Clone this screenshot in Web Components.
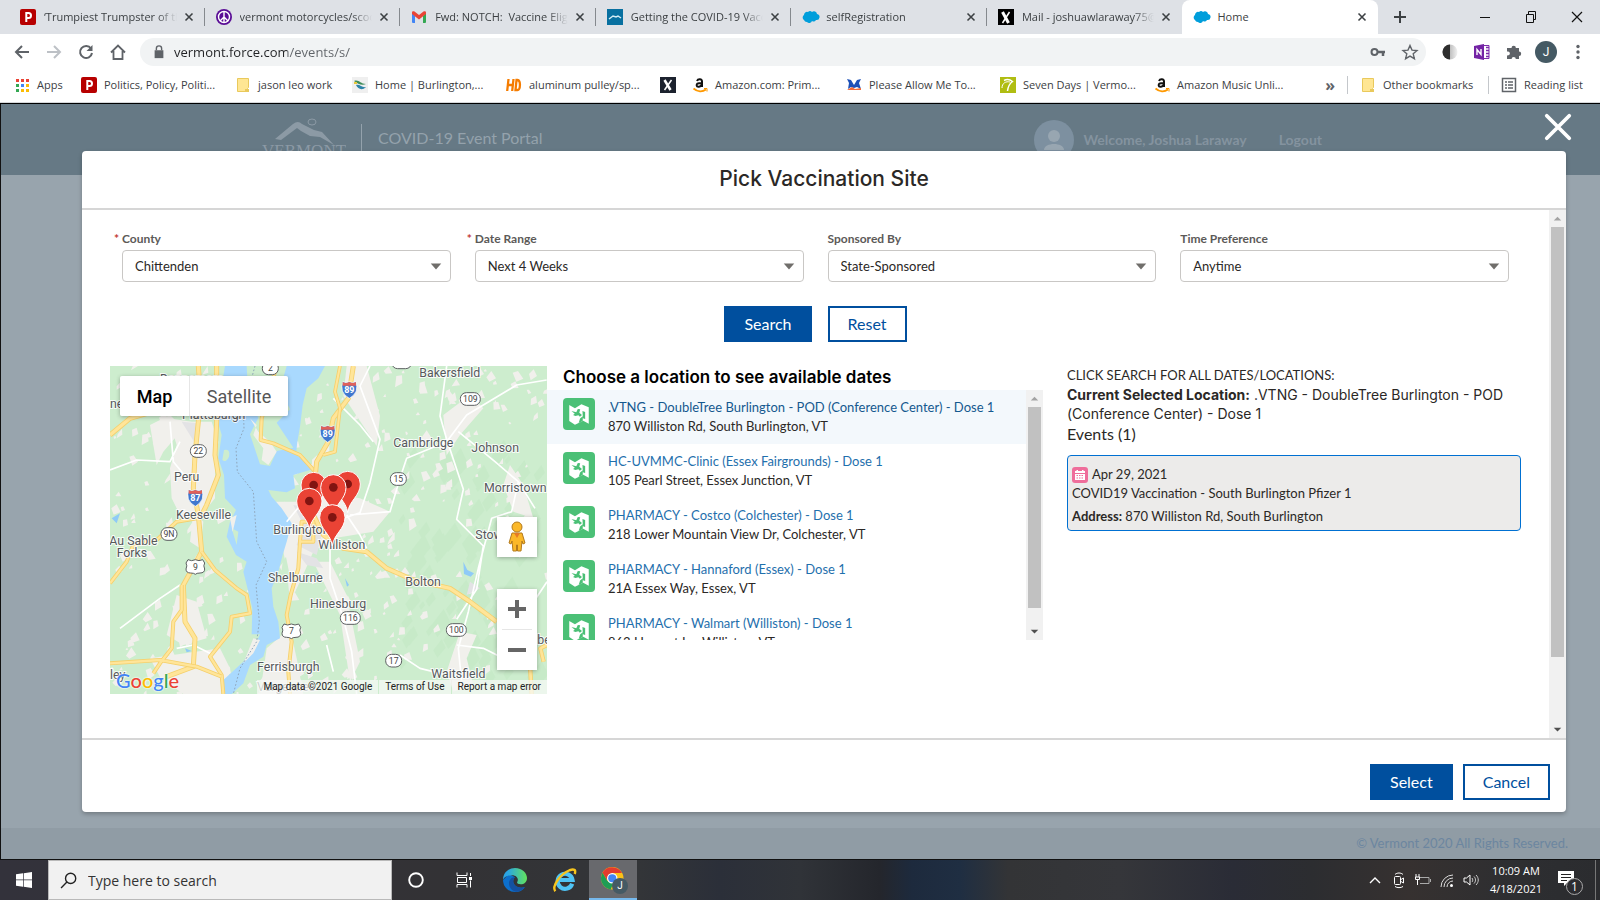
<!DOCTYPE html>
<html lang="en">
<head>
<meta charset="utf-8">
<title>Home</title>
<style>
html,body{margin:0;height:100%}
body{min-height:100vh;display:flex;flex-direction:column;font-family:"Open Sans","Noto Sans",sans-serif;font-size:11px;color:#3c4043;background:#000;overflow:hidden}
</style>
</head>
<body>
<browser-chrome></browser-chrome>
<portal-page></portal-page>
<task-bar></task-bar>
<script>
const define=(tag,render)=>customElements.define(tag,class extends HTMLElement{
  connectedCallback(){
    if(this.shadowRoot)return;
    this.attachShadow({mode:'open'}).innerHTML=render(n=>this.getAttribute(n)||'',this);
  }
});

/* ---------- icons ---------- */
const cloud='<path fill="#009edb" d="M2 6a3 3 0 0 1 4-3 3 3 0 0 1 4 0 3 3 0 0 1 5 2 3 3 0 0 1-1 6 3 3 0 0 1-4 1 3 3 0 0 1-5 1 3 3 0 0 1-3-2 3 3 0 0 1 0-5z"/>';
const icons={
  politico:'<rect width="16" height="16" rx="2" fill="#b70000"/><path d="M6.3 13V4h2.200a2.300 2.300 0 0 1 0 5H7" fill="none" stroke="#fff" stroke-width="2"/>',
  peace:'<circle cx="8" cy="8" r="8" fill="#5a0d96"/><circle cx="8" cy="8" r="5.500" fill="none" stroke="#fff" stroke-width="1.400"/><path d="M8 2.500v11M8 8l-4 4M8 8l4 4" stroke="#fff" stroke-width="1.400"/>',
  gmail:'<path fill="#4285f4" d="M1 4v9a1 1 0 0 0 1 1h2V7z"/><path fill="#34a853" d="M15 4v9a1 1 0 0 1-1 1h-2V7z"/><path fill="#ea4335" d="M1 5V3.500C1 2 2.500 2 3.500 2.500L8 6l4.500-3.500C13.500 2 15 2 15 3.500V5l-7 5.500z"/>',
  health:'<rect width="16" height="16" fill="#0870a0"/><path d="M2 10l4-3 3 1 2-1 3 2" fill="none" stroke="#d5edf5" stroke-width="1.500"/>',
  cloud,
  xmail:'<rect width="16" height="16" fill="#000"/><path d="M4.500 3l6 11" stroke="#fff" stroke-width="3"/><path d="M11.500 3l-7 11" stroke="#fff" stroke-width="1.500"/>',
  xdark:'<rect width="16" height="16" fill="#1c222e"/><path d="M4.500 3l6 10" stroke="#fff" stroke-width="2.500"/><path d="M11.500 3l-7 10" stroke="#fff" stroke-width="1.500"/>',
  apps:'<g><path fill="#ea4335" d="M2 2h3v3H2zM7 2h3v3H7zM12 2h3v3h-3z"/><path fill="#34a853" d="M2 7h3v3H2z"/><path fill="#4285f4" d="M7 7h3v3H7z"/><path fill="#fbbc04" d="M12 7h3v3h-3zM7 12h3v3H7zM12 12h3v3h-3z"/><path fill="#34a853" d="M2 12h3v3H2z"/></g>',
  folder:'<path fill="#ffe693" stroke="#e9c95c" d="M2.500 1.500h11v9l-1 1v3h-10z"/><path fill="#e9c95c" d="M10 12h4v3h-4z"/>',
  burl:'<rect width="16" height="16" fill="#efefef"/><path fill="#3f8c5a" d="M2 4c5-2 6 3 12 3-4 2-8 0-12-3z"/><path fill="#2d83a8" d="M4 8c4-1 6 3 10 2-4 4-8 2-10-2z"/><path fill="#e8c83c" d="M2 5h3v2H2z"/>',
  hd:'<g fill="none" stroke="#f57c00" stroke-width="2.300"><path d="M2.500 2L1.200 14M7.500 2L6.200 14M2 8h5M10.500 3L9.500 13h2c3 0 3.500-10 0-10z"/></g>',
  amazon:'<path d="M5 4c1-2.500 5-2.200 5 .5V10M10 6C5 6 4.500 7 4.700 8.600c.3 1.900 4 1.700 5-1" fill="none" stroke="#111" stroke-width="2"/><path d="M1.500 11.500c4 3.500 9 3.500 12.500 1" fill="none" stroke="#f90" stroke-width="1.800"/><path d="M12 11.500h3v3" fill="none" stroke="#f90"/>',
  dance:'<path fill="#1c50b8" d="M1 2l4 1 3 5 3-5 4-1-2 4 2 6-4-2-3 1-3-1-3 2 1-6z"/><path fill="#f26b3a" d="M1 13l5-3 3 2 6-1v2z"/>',
  seven:'<rect width="16" height="16" fill="#b0bd12"/><path d="M4 3.500c3-1.500 6-1 8.500 1C9 7 8 10 7.500 14" fill="none" stroke="#fff" stroke-width="1.500"/><path d="M2 11c0-5 4-7 8-6" fill="none" stroke="#fff"/>',
  list:'<rect x="1.500" y="1.500" width="13" height="13" fill="none" stroke="#5f6368" stroke-width="1.500"/><path d="M4 5h2M7 5h5M4 8h2M7 8h5M4 11h2M7 11h5" stroke="#5f6368" stroke-width="1.500"/>',
  back:'<path d="M15 8H2M8 2L2 8l6 6" fill="none" stroke="#5f6368" stroke-width="2"/>',
  fwd:'<path d="M1 8h13M8 2l6 6-6 6" fill="none" stroke="#bdc1c6" stroke-width="2"/>',
  reload:'<path d="M13 4.500A6 6 0 1 0 14 9" fill="none" stroke="#5f6368" stroke-width="2"/><path d="M14.500 1v6h-6z" fill="#5f6368"/>',
  home:'<path d="M1 8.500L8 1.500l7 7M3.500 7v8h9V7" fill="none" stroke="#5f6368" stroke-width="1.800"/>',
  lock:'<path fill="#5f6368" d="M3 6h10v9H3z"/><path d="M5 6V4a3 3 0 0 1 6 0v2" fill="none" stroke="#5f6368" stroke-width="1.600"/>',
  key:'<circle cx="4.500" cy="8" r="3" fill="none" stroke="#5f6368" stroke-width="2"/><path d="M7 8h8M13 8v4" stroke="#5f6368" stroke-width="2.500"/>',
  star:'<path d="M8 1.500l2 4.600 5 .4-3.800 3.300 1.200 4.900L8 12.100l-4.400 2.600 1.200-4.900L1 6.500l5-.4z" fill="none" stroke="#5f6368" stroke-width="1.400"/>',
  moon:'<defs><linearGradient id="m"><stop offset=".4" stop-color="#b5b5b5"/><stop offset="1" stop-color="#f2f2f2"/></linearGradient></defs><circle cx="8" cy="8" r="7.500" fill="url(#m)"/><path d="M8 .5a7.500 7.500 0 0 0 0 15z" fill="#2e2e2e"/>',
  onenote:'<path fill="#fff" stroke="#7b2bab" d="M8 1.500h7v13H8z"/><path d="M12 3.500h3M12 6.500h3M12 9.500h3M12 12.500h3" stroke="#7b2bab" stroke-width="1.500"/><path fill="#7424a5" d="M0 2l10-2v16L0 14z"/><path d="M3 11V5.500l4 5V5" fill="none" stroke="#fff" stroke-width="1.400"/>',
  puzzle:'<path fill="#5f6368" d="M1 4h4.500a2.200 2.200 0 1 1 4.400 0H13v3.600a2.200 2.200 0 1 1 0 4.400V15H9.800a2.100 2.100 0 1 0-4.200 0H1v-3.800a2 2 0 1 0 0-3.600z"/>',
  dots:'<g fill="#5f6368"><circle cx="8" cy="2.500" r="1.700"/><circle cx="8" cy="8" r="1.700"/><circle cx="8" cy="13.500" r="1.700"/></g>',
  plus:'<path d="M8 2v12M2 8h12" stroke="#3c4043" stroke-width="2"/>',
  min:'<path d="M3 8.500h10" stroke="#111"/>',
  restore:'<path d="M3.500 5.500h7v8h-7zM5.500 5V2.500h7v8H11" fill="none" stroke="#111"/>',
  close:'<path d="M3 3l10 10M13 3L3 13" stroke="#111" stroke-width="1.200"/>',
  tabx:'<path d="M4 4l8 8M12 4l-8 8" stroke="#3c4043" stroke-width="1.800"/>',
  bigx:'<path d="M2 2l12 12M14 2L2 14" stroke="#fff" stroke-width="2" stroke-linecap="round"/>',
  up:'<path d="M4 10l4-4 4 4z" fill="#a3a3a3"/>',
  down:'<path d="M4 6l4 4 4-4z" fill="#505050"/>',
  map:'<path fill="#fff" d="M1.500 2L5.300 4.200 9.600 1.500l4.900 2V14.500l-3.700-2-5.500 2.700-3.800-2.500z"/><path fill="#4bc076" d="M3 6l3.200.8 1-2.200 1.600.2-.6 2.400L10 8.600 8.600 9.800l-1-1-2 .6L4 8.600 5.200 7.800zM10.300 6l1.800.6v4.800l-1.500-.6zM7.800 14l2.700-1.300V9.500L8.700 11z"/>',
  cal:'<path fill="#fff" d="M3 4h1.500V3H6v1h4V3h1.500v1H13v2H3zM3 7h10v6H3z"/><path d="M4.500 8.500h7M4.500 11h7" stroke="#ef6e9b" stroke-dasharray="1.500 1"/>',
  win:'<path fill="#fff" d="M0 2.300L7 1.300V7.600H0zM7.700 1.200L16 0v7.600H7.700zM0 8.300h7v6.400l-7-1zM7.700 8.300H16V16l-8.300-1.200z"/>',
  search:'<circle cx="10" cy="6" r="4.800" fill="none" stroke="#222" stroke-width="1.300"/><path d="M6.500 9.500L1 15" stroke="#222" stroke-width="1.300"/>',
  cortana:'<circle cx="8" cy="8" r="6.800" fill="none" stroke="#fff" stroke-width="1.900"/>',
  taskview:'<path d="M1 .500v3h10v-3M1 15.500v-3h10v3M1.500 5.500h9v5h-9zM14.500 1v3M14.500 8.500v7" fill="none" stroke="#fff"/><path d="M13 5h3v3h-3z" fill="#fff"/>',
  edge:'<defs><linearGradient id="e"><stop offset=".2" stop-color="#2aa5e4"/><stop offset="1" stop-color="#62e35c"/></linearGradient></defs><path fill="#0c6fcc" d="M0 8a8 8 0 0 0 8 8c3 0 5-1 6.600-3.400-3 1.200-6.600.2-7.600-2.600-.6-2 .6-3.500 1-3.800L4 4z"/><path fill="#1450a0" d="M4 10c0 3 2 5.500 5 5.900 2.500-.3 4.500-1.500 5.600-3.300-3 1.200-6.600.2-7.600-2.600-.6-2 .6-3.500 1-3.800C6 5.700 4 8 4 10z"/><path fill="url(#e)" d="M0 8C0 3 4 0 8 0c5 0 8 3.500 8 6.600 0 2.700-2 4.200-4.200 4.200-2 0-2.800-.8-2.300-1.500C10.600 7.600 9.500 4.800 6 4.800 3 4.800.3 6.500 0 8z"/>',
  ie:'<path d="M12.800 10.500A5 5 0 1 1 13 8H4" fill="none" stroke="#4fc4f5" stroke-width="2.800"/><path d="M1.500 15.500C-1 12 5 4 11 1.500c3-1 4.500-.500 3.500 2.500" fill="none" stroke="#f7c51e" stroke-width="1.600"/>',
  chrome:'<circle cx="7.500" cy="7.500" r="7.500" fill="#fbc116"/><path fill="#e33b2e" d="M1 3.800A7.500 7.500 0 0 1 14 4H7.500L4.200 9z"/><path fill="#1f9d55" d="M1 3.800l3.300 5.600L8 11l-1.500 4A7.500 7.500 0 0 1 1 3.800z"/><circle cx="7.500" cy="7.500" r="3.500" fill="#fff"/><circle cx="7.500" cy="7.500" r="2.700" fill="#4285f4"/>',
  caret:'<path d="M3 11l5-5 5 5" fill="none" stroke="#fff" stroke-width="1.400"/>',
  meet:'<rect x="3.500" y="4.500" width="6" height="8" rx="1" fill="none" stroke="#fff"/><path d="M10 7.500l2.500-1.500v5L10 9.500M4 2.500c2-2 6-2 8 0M4 14.500c2 1.500 6 1.500 8 0" fill="none" stroke="#fff"/>',
  battery:'<path d="M5 5.500h9v6H5M15.500 7v3" fill="none" stroke="#aaa"/><path d="M1 2v3M4 2v3M.500 5h4v2.500h-4zM2.500 7.500V13" fill="none" stroke="#fff"/>',
  wifi:'<g fill="none" stroke="#ddd"><path d="M2 15A12 12 0 0 1 14 3M5 15a9 9 0 0 1 9-9M8 15a6 6 0 0 1 6-6"/></g><circle cx="12.500" cy="13.500" r="1.500" fill="#fff"/>',
  volume:'<path d="M1 6h2.500L7 3v10l-3.500-3H1z" fill="none" stroke="#fff"/><path d="M9 6c1 1.500 1 3 0 4M11 4.500c2 2 2 5 0 7M13 3c3 3 3 7 0 10" fill="none" stroke="#ccc"/>',
  note:'<path fill="#fff" d="M0 0h16v12H9l-3 3v-3H0z"/><path d="M3 3.500h10M3 6.500h10M3 9.500h6" stroke="#222"/>',
  caretdown:'<path d="M2 5h12l-6 7z" fill="#706e6b"/>'
};
define('ui-icon',a=>`<style>:host{display:inline-block;flex:none;width:${a('size')||16}px;height:${a('size')||16}px}svg{display:block;width:100%;height:100%;overflow:visible}</style><svg viewBox="0 0 16 16" aria-hidden="true">${icons[a('name')]}</svg>`);

define('icon-button',a=>`<style>:host{display:block;flex:none}button{display:flex;align-items:center;justify-content:center;width:${a('width')||32}px;height:${a('height')||32}px;padding:0;border:0;background:none}</style><button aria-label="${a('label')}"><ui-icon name="${a('name')}" size="${a('size')||16}"></ui-icon></button>`);

/* ---------- browser ---------- */
define('browser-tab',a=>`<style>
:host{display:flex;flex:1 1 0;min-width:0;height:34px;align-items:center;position:relative;padding:0 4px 0 11px;box-sizing:border-box}
:host::after{content:"";position:absolute;right:0;top:8px;height:18px;width:1px;background:#85898e}
:host([last])::after,:host([active])::after{display:none}
:host([active]){background:#fff;border-radius:8px 8px 0 0}
span{flex:1;min-width:0;margin-left:8px;overflow:hidden;white-space:nowrap;line-height:18px;-webkit-mask-image:linear-gradient(90deg,#000 calc(100% - 20px),transparent);mask-image:linear-gradient(90deg,#000 calc(100% - 20px),transparent)}
:host([active]) span{-webkit-mask-image:none;mask-image:none}
</style><ui-icon name="${a('icon')}"></ui-icon><span><slot></slot></span><icon-button name="tabx" label="Close tab" size="14" width="24"></icon-button>`);

define('bookmark-item',a=>`<style>
:host{display:block;flex:none}
a{display:flex;align-items:center;gap:7px;color:#3c4043;text-decoration:none;line-height:18px;white-space:nowrap}
span{width:${a('width')?a('width')+'px':'auto'}}
:host([bare]) span{display:none}
</style><a href="#" aria-label="${a('label')}"><ui-icon name="${a('icon')}"></ui-icon><span><slot></slot></span></a>`);

define('browser-chrome',()=>`<style>
:host{display:block;flex:none;background:#fff;border-bottom:1px solid #000}
.tabs{display:flex;height:34px;background:#dee1e6;padding-left:9px;align-items:center}
.list{display:flex;flex:1;min-width:0}
.win{display:flex;margin-left:40px;align-items:flex-start}
.bar{display:flex;height:36px;align-items:center;padding:0 6px}
.url{flex:1;display:flex;align-items:center;height:28px;border-radius:14px;background:#f1f3f4;margin:0 8px 0 6px;padding-left:12px;box-sizing:border-box}
input{flex:1;min-width:0;border:0;outline:0;font:13px "Open Sans","Noto Sans",sans-serif;color:transparent;caret-color:#202124;background:linear-gradient(90deg,#202124 121px,#5f6368 121px);-webkit-background-clip:text;background-clip:text;padding:0 0 0 8px;height:24px}
.me{width:22px;height:22px;border-radius:50%;border:0;padding:0;background:#455a64;color:#fff;font:12px Roboto,sans-serif;margin:0 5px}
.marks{display:flex;height:32px;box-sizing:content-box;align-items:center;gap:16px;padding:0 14px;border-bottom:1px solid #d5d7da}
.marks>*{padding-bottom:3px}
i{width:1px;height:18px;background:#c4c7cb}
.end{display:flex;gap:12px;align-items:center;margin-left:auto}
.more{border:0;background:none;padding:0;font:bold 16px "Open Sans",sans-serif;color:#5f6368;line-height:16px}
</style>
<div class="tabs"><div class="list">
<browser-tab icon="politico">‘Trumpiest Trumpster of them</browser-tab>
<browser-tab icon="peace">vermont motorcycles/scooters</browser-tab>
<browser-tab icon="gmail">Fwd: NOTCH:&nbsp; Vaccine Eligible</browser-tab>
<browser-tab icon="health">Getting the COVID-19 Vaccine</browser-tab>
<browser-tab icon="cloud">selfRegistration</browser-tab>
<browser-tab icon="xmail" last>Mail - joshuawlaraway75@</browser-tab>
<browser-tab icon="cloud" active>Home</browser-tab></div>
<icon-button name="plus" label="New tab" width="44"></icon-button>
<div class="win"><icon-button name="min" label="Minimize" width="46"></icon-button><icon-button name="restore" label="Restore" width="46"></icon-button><icon-button name="close" label="Close" width="46"></icon-button></div></div>
<div class="bar"><icon-button name="back" label="Back"></icon-button><icon-button name="fwd" label="Forward"></icon-button><icon-button name="reload" label="Reload"></icon-button><icon-button name="home" label="Home"></icon-button>
<div class="url"><ui-icon name="lock" size="14"></ui-icon><input aria-label="Address" value="vermont.force.com/events/s/"><icon-button name="key" label="Passwords"></icon-button><icon-button name="star" label="Bookmark"></icon-button></div>
<icon-button name="moon" label="Dark mode"></icon-button><icon-button name="onenote" label="OneNote"></icon-button><icon-button name="puzzle" label="Extensions"></icon-button><button class="me">J</button><icon-button name="dots" label="Menu"></icon-button></div>
<div class="marks">
<bookmark-item icon="apps" width="28">Apps</bookmark-item>
<bookmark-item icon="politico" width="115">Politics, Policy, Politi...</bookmark-item>
<bookmark-item icon="folder" width="78">jason leo work</bookmark-item>
<bookmark-item icon="burl" width="115">Home | Burlington,...</bookmark-item>
<bookmark-item icon="hd" width="115">aluminum pulley/sp...</bookmark-item>
<bookmark-item icon="xdark" bare label="Xfinity"></bookmark-item>
<bookmark-item icon="amazon" width="115">Amazon.com: Prim...</bookmark-item>
<bookmark-item icon="dance" width="115">Please Allow Me To...</bookmark-item>
<bookmark-item icon="seven" width="115">Seven Days | Vermo...</bookmark-item>
<bookmark-item icon="amazon" width="115">Amazon Music Unli...</bookmark-item>
<div class="end"><button class="more" aria-label="More bookmarks">»</button><i></i><bookmark-item icon="folder" width="93">Other bookmarks</bookmark-item><i></i><bookmark-item icon="list" width="62">Reading list</bookmark-item></div>
</div>`);

/* ---------- shared controls ---------- */
define('action-button',a=>`<style>
:host{display:block}
button{height:36px;box-sizing:border-box;border:2px solid #004f9e;background:#fff;color:#004f9e;font:16px Lato,sans-serif;padding:0 18px 2px;display:block}
:host([primary]) button{background:#004f9e;color:#fff}
</style><button type="button"><slot></slot></button>`);

define('select-field',a=>`<style>
:host{display:block;padding:0 12px;position:relative}
label{display:block;font:bold 12px/18px Lato,sans-serif;color:#5c5a58;margin-bottom:2px}
abbr{position:absolute;left:4px;color:#c23934;text-decoration:none}
.box{display:grid;align-items:center}
select,ui-icon{grid-area:1/1}
ui-icon{justify-self:end;margin-right:8px;pointer-events:none}
select{appearance:none;-webkit-appearance:none;width:100%;height:32px;border:1px solid #c9c7c5;border-radius:4px;background:#fff;color:#2b2826;font:13px Lato,sans-serif;padding:0 30px 0 12px}
</style><label for="s">${a('required')?'<abbr title="required">*</abbr>':''}${a('label')}</label><div class="box"><select id="s"><option>${a('value')}</option></select><ui-icon name="caretdown" size="14"></ui-icon></div>`);

define('scroll-rail',a=>`<style>
:host{display:flex;flex-direction:column;flex:none;width:17px;background:#f1f1f1}
.t{flex:1;min-height:0;padding:0 2px}
.t div{height:${a('size')}%;background:#c1c1c1}
</style><icon-button name="up" label="Scroll up" width="17" height="17" size="15"></icon-button><div class="t"><div></div></div><icon-button name="down" label="Scroll down" width="17" height="17" size="15"></icon-button>`);

define('location-item',a=>`<style>
:host{display:flex;gap:13px;height:54px;box-sizing:border-box;padding:8px 12px 0 16px}
:host([selected]){background:#f3f8fc}
.pic{width:32px;height:32px;border-radius:4px;background:#4bc076;display:grid;place-items:center;flex:none}
.txt{font:13px/19px Lato,sans-serif;color:#2b2826;white-space:nowrap}
a{color:#1f70ad;text-decoration:none;display:block}
:host([selected]) a{color:#15598f}
</style><div class="pic"><ui-icon name="map" size="24"></ui-icon></div><div class="txt"><a href="#">${a('name')}</a>${a('address')}</div>`);

/* ---------- map ---------- */
const scatter=()=>{
  let s=7,out='',dark='';const r=()=>(s=(s*16807)%2147483647)/2147483647;
  for(let i=0;i<420;i++){
    const x=30+r()*1311,y=33+r()*984,k=5+r()*13;
    if(x>900&&y>480&&r()<.75)continue;
    out+=`M${x|0} ${y|0}l${k|0} ${(-k*r()*1.6)|0}l${(k*r())|0} ${(k*1.4)|0}l${(-k*1.3)|0} ${(k*r())|0}z`;
  }
  for(let i=0;i<90;i++){
    const x=880+r()*430,y=300+r()*700,k=12+r()*30;
    dark+=`M${x|0} ${y|0}l${k|0} ${(-k*1.3)|0}l${(k*.5)|0} ${k|0}l${-k|0} ${(k*1.2)|0}z`;
  }
  return `<path fill="#bfe5c1" opacity=".4" d="${dark}"/><path fill="#f1f0ec" d="${out}"/>`;
};
const lab=(x,y,t)=>`<text x="${x}" y="${y}">${t}</text>`;
const route=(x,y,t)=>`<rect x="${x-(t.length>2?30:24)}" y="${y-19}" width="${t.length>2?60:48}" height="38" rx="18" fill="#fff" stroke="#5d6062" stroke-width="3"/><text class="n" x="${x}" y="${y+9}">${t}</text>`;
const us=(x,y,t)=>`<path d="M${x-22} ${y-21}q11 6 22 0q11 6 22 0l6 10q-5 8 0 18q0 12-14 12q-10 0-14 4q-4-4-14-4q-14 0-14-12q5-10 0-18z" fill="#fff" stroke="#5d6062" stroke-width="3"/><text class="n" x="${x}" y="${y+9}">${t}</text>`;
const inter=(x,y,t)=>`<path d="M${x-19} ${y-23}q9 6 19 0q10 6 19 0q6 14 2 28q-6 14-21 22q-15-8-21-22q-4-14 2-28z" fill="#3f77cf" stroke="#fff" stroke-width="2"/><path d="M${x-20} ${y-22}q9 6 20 0q11 6 20 0v11h-40z" fill="#e0605a"/><text class="i" x="${x}" y="${y+12}">${t}</text>`;
const pin=(x,y)=>`<path d="M${x} ${y+86}C${x-4} ${y+50} ${x-38} ${y+36} ${x-38} ${y}a38 38 0 0 1 76 0C${x+38} ${y+36} ${x+4} ${y+50} ${x} ${y+86}z" fill="#ea4335" stroke="#fff" stroke-width="3"/><circle cx="${x}" cy="${y}" r="13" fill="#811411"/>`;
const road=(d,w=10)=>`<path d="${d}" class="o" stroke-width="${w+5}"/><path d="${d}" class="y" stroke-width="${w}"/>`;
define('location-map',()=>`<style>
:host{display:block;position:relative;height:328px;overflow:hidden;background:#cdedce;font-family:Roboto,sans-serif}
svg.m{display:block;width:100%;height:100%}
svg path{stroke-linejoin:round}
text{font:37px Roboto,sans-serif;fill:#56595c;stroke:#fff;stroke-width:6px;paint-order:stroke;stroke-opacity:.85}
text.n{font-size:26px;fill:#444;stroke:none;text-anchor:middle}
text.i{font:bold 27px Roboto,sans-serif;fill:#fff;stroke:none;text-anchor:middle}
.o{stroke:#f5d06c;fill:none}.y{stroke:#ffe599;fill:none}.w{stroke:#fff;fill:none;stroke-width:5}
button{border:0;background:#fff;padding:0;display:flex;align-items:center;justify-content:center}
.type{position:absolute;left:10px;top:10px;display:flex;box-shadow:0 1px 4px rgba(0,0,0,.3);border-radius:2px;overflow:hidden}
.type button{height:40px;font:18px Roboto,sans-serif;color:#565656;width:98px}
.type button:first-child{width:70px;font-weight:500;color:#000;border-right:1px solid #e6e6e6}
.side{position:absolute;right:10px;bottom:24px;display:flex;flex-direction:column;gap:32px}
.side div{box-shadow:0 1px 4px rgba(0,0,0,.3);border-radius:2px;background:#fff}
.side button{width:40px;height:40px}
hr{margin:0 5px;border:0;height:1px;background:#e6e6e6}
.g{position:absolute;left:6px;bottom:1px;font:500 20px/26px Lato,sans-serif;text-shadow:0 0 2px #fff,0 0 2px #fff}
.legal{position:absolute;right:0;bottom:0;height:14px;font-size:10px;line-height:14px;display:flex;gap:1px;white-space:nowrap}
.legal>*{background:rgba(245,248,245,.75);padding:0 6px;color:#222;text-decoration:none}
</style>
<svg class="m" viewBox="30 33 1311 984" preserveAspectRatio="xMidYMid slice" role="img" aria-label="Map of locations">
${scatter()}
<g fill="#f1f0ec"><path d="M205 190l70 10 60 0 20 60-10 90 0 80-40 50-60 10-30-60-5-90 20-70z"/><path d="M150 210l60-30 40 40-60 70-20 40z"/><path d="M520 440l70 0 60-30 130 20 90 40-50 60-120 20-60 40-40 90-30 60-10-100z"/><path d="M640 620l50 0 50 100 40 200-30 60-30-200z"/><path d="M280 470l30 30-10 80-30-20zM230 720l60 20 30 110-70 20-50-30z"/><path d="M150 910l210-30 30 60-10 77H250l-70-50z"/><path d="M740 33h60l40 150-10 90-40-60-60-90z"/><path d="M1030 180l80-60 40 40-70 80-40 60z"/><path d="M1230 330l40 60 30 100-60-20-30-80zM1080 830l50 10-30 70 20 80-60 20-20-60z"/><path d="M500 880l70-60 20 90 20 107H480z"/></g>
<path fill="#e3e3e5" d="M580 450l60 10 30 60-20 80-60-30 20-60zM590 590l60 20 20 30-50-10zM245 200l50 5-10 60zM1110 680l30 20-40 20z"/>
<path fill="#a9d9fe" d="M375 33H675L655 70 620 100 608 150 600 215 592 260 588 298 640 342 580 360 585 400 560 412 505 405 515 425 545 460 575 505 560 560 548 600 535 650 515 700 520 755 535 800 540 850 500 870 490 905 450 930 430 985 395 1017H365L370 975 430 920 470 860 480 838 455 838 457 760 440 690 430 650 440 620 408 600 380 545 390 500 408 465 375 430 372 360 355 310 365 240 350 185Z"/>
<path fill="#cdedce" d="M440 33h120l-20 70 30 60-40 40 50 75-50 10-20 45-30-5-30-90 25-50-30-60zM372 285q20-5 15 20-10 20-20 10zM548 620l10-15 12 60-30 20zM395 520l20 10-5 40z"/>
<path fill="#f1f0ec" d="M450 190l20 20-10 30 30 40-5 35 20 15 25-40-20-30-35-30zM520 100l20 60 20-40zM390 490l20-10-12 50zM460 850l20 5-20 40-30 30z"/>
<path d="M465 33L430 160 432 220 408 280 412 350 460 410 470 560 500 620 468 690 478 800 470 860 420 940 400 1017" fill="none" stroke="#8fa6bc" stroke-width="3" stroke-dasharray="5 6"/>
<g fill="#8fcaf7"><path d="M1090 620l12 25 20 10-10 10-20-8zM735 670l12 20-6 5zM650 650l8 20-8 8zM255 880l20 8-15 4zM35 490l25-15-10 30z"/></g>
<path class="w" d="M30 345l80-30 100 5 30-60M210 200l10 120 50 60M340 180l5-60M810 33l-30 60 60 160-30 130-30 90-90 30M700 130l80 80 40 50M1040 33l-20 150 20 70 50 150-20 90 80 80-20 130-60 90M1040 260l60-80 150-90 90-15M1040 260l-120 50-20 60-30 100-120 10M1075 230l110 90 70 60 50 80M1255 380l-20 90-60 20-40 150-30 130-30 110 10 100M1070 870l80 10 60 30M690 560l0 110 40 120 25 100 15 127M560 500l50-60M740 480l40 60 20 40M900 900l60 40 80 20M340 120l-80 60M60 820l120-90 60-40M680 870l20 80M1341 680l-60 90-20 110M230 880l50-10 60 30"/>
${road('M30 240L90 190 160 170')}${road('M295 33L300 100 295 200 285 300 280 400 295 480 305 590 250 690 255 800 285 850 280 935 200 965')}${road('M350 33L350 200 345 300 355 360 320 450 300 490')}${road('M30 685L80 620 100 570 170 555 230 500 290 490',7)}${road('M305 590L345 645 410 700 440 720 450 775 395 785 390 830 330 905 365 960 370 1017',7)}${road('M245 690L245 765 220 800 215 880 180 925 160 955M30 925L180 915 290 935 365 965',7)}
${road('M530 33L485 190 482 255 520 265 600 300 645 350',7)}${road('M760 33L745 130 700 190 685 260 650 320 645 370 640 480 670 540 730 580 800 590 860 640 940 675 1050 700 1110 740 1150 770 1190 800')}${road('M720 33L705 110 720 160 705 290 670 300',6)}${road('M605 500h35v60h-40zM600 560L595 640 572 720 560 780 575 860 565 950 570 1017',7)}${road('M1341 870l-20 10 10 40M1290 930l5 87',8)}
${lab(180,85,'Dannemora')}${lab(30,160,'ner')}${lab(246,193,'Plattsburgh')}${lab(958,67,'Bakersfield')}${lab(880,277,'Cambridge')}${lab(1114,292,'Johnson')}${lab(222,379,'Peru')}${lab(1152,411,'Morristown')}${lab(228,492,'Keeseville')}${lab(520,538,'Burlington')}${lab(1126,552,'Stowe')}${lab(28,570,'Au Sable')}${lab(50,606,'Forks')}${lab(655,582,'Williston')}${lab(504,682,'Shelburne')}${lab(916,693,'Bolton')}${lab(630,760,'Hinesburg')}${lab(1312,866,'bel')}${lab(471,949,'Ferrisburgh')}${lab(994,970,'Waitsfield')}${lab(30,972,'ley')}${lab(471,1007,'Vergennes')}
${route(511,40,'2')}${route(905,22,'108')}${route(1111,132,'109')}${route(295,288,'22')}${route(895,372,'15')}${route(207,537,'9N')}${route(751,789,'116')}${route(1069,825,'100')}${route(881,917,'17')}${us(286,635,'9')}${us(574,828,'7')}${inter(748,103,'89')}${inter(683,235,'89')}${inter(286,427,'87')}
${pin(641,390)}${pin(743,387)}${pin(700,397)}${pin(628,438)}${pin(697,487)}
</svg>
<div class="type"><button>Map</button><button>Satellite</button></div>
<div class="side"><div><button aria-label="Street view"><svg width="18" height="32" viewBox="0 0 18 32"><path d="M4 12h10l3 10-2 1-1-3-1 10H9.500V24h-1v6H5L4 20l-1 3-2-1z" fill="#fbb829" stroke="#b37a1c"/><circle cx="9" cy="6" r="5" fill="#fbb829" stroke="#b37a1c"/><path d="M6 12h6l-3 5z" fill="#e57b26"/></svg></button></div>
<div><button aria-label="Zoom in"><svg width="18" height="18"><path d="M9 0v18M0 9h18" stroke="#666" stroke-width="4"/></svg></button><hr><button aria-label="Zoom out"><svg width="18" height="18"><path d="M0 9h18" stroke="#666" stroke-width="4"/></svg></button></div></div>
<div class="g"><span style="color:#4285f4">G</span><span style="color:#ea4335">o</span><span style="color:#fbbc04">o</span><span style="color:#4285f4">g</span><span style="color:#34a853">l</span><span style="color:#ea4335">e</span></div>
<div class="legal"><span>Map data ©2021 Google</span><a href="#">Terms of Use</a><a href="#">Report a map error</a></div>`);

/* ---------- events ---------- */
define('event-card',a=>`<style>
:host{display:block;box-sizing:border-box;border:1px solid #0070d2;border-radius:4px;background:#ecebea;font:13px/19px Lato,sans-serif;color:#2b2826;padding:9px 4px 4px;height:76px}
.d{display:flex;gap:4px;align-items:center}
.c{width:16px;height:16px;border-radius:3px;background:#ef6e9b;flex:none}
.a{margin-top:4px}
</style><div class="d"><div class="c"><ui-icon name="cal"></ui-icon></div>${a('date')}</div><div>${a('name')}</div><div class="a"><b>Address:</b> ${a('address')}</div>`);

/* ---------- dialog ---------- */
define('site-dialog',()=>`<style>
:host{display:flex;flex-direction:column;background:#fff;border-radius:4px;box-shadow:0 2px 4px rgba(0,0,0,.25);color:#2b2826;font-family:Lato,sans-serif}
h2{margin:0;height:59px;box-sizing:border-box;padding-bottom:2px;display:grid;place-items:center;font:500 21px Inter,sans-serif;border-bottom:2px solid #d6d6d6}
.body{flex:1;min-height:0;display:flex}
.in{flex:1;min-width:0;padding:20px 28px 0;overflow:hidden}
.f{display:grid;grid-template-columns:repeat(4,1fr)}
.b{display:flex;justify-content:center;gap:16px;margin:24px 0}
.g{display:grid;grid-template-columns:minmax(0,437fr) minmax(0,496fr) minmax(0,478fr)}
h3{margin:0;height:24px;padding-left:16px;font:600 17px/22px Inter,sans-serif;color:#000}
.l{display:flex;height:250px}
.items{flex:1;min-width:0;overflow:hidden}
.r{padding-left:24px;font:13px/19px Lato,sans-serif}
.r p{margin:0}
.r .sel{font:14px/19px Inter,sans-serif}
.r .ev{font-size:16px;line-height:21px;margin-bottom:11px}
footer{flex:none;height:72px;box-sizing:content-box;border-top:2px solid #d6d6d6;display:flex;gap:10px;justify-content:flex-end;align-items:center;padding-right:16px;padding-top:0;box-sizing:border-box;height:74px}
footer action-button{margin-top:12px}
</style>
<h2>Pick Vaccination Site</h2>
<div class="body"><div class="in">
<div class="f"><select-field label="County" value="Chittenden" required="1"></select-field><select-field label="Date Range" value="Next 4 Weeks" required="1"></select-field><select-field label="Sponsored By" value="State-Sponsored"></select-field><select-field label="Time Preference" value="Anytime"></select-field></div>
<div class="b"><action-button primary>Search</action-button><action-button>Reset</action-button></div>
<div class="g"><location-map></location-map>
<div><h3>Choose a location to see available dates</h3><div class="l"><div class="items">
<location-item selected name=".VTNG - DoubleTree Burlington - POD (Conference Center) - Dose 1" address="870 Williston Rd, South Burlington, VT"></location-item>
<location-item name="HC-UVMMC-Clinic (Essex Fairgrounds) - Dose 1" address="105 Pearl Street, Essex Junction, VT"></location-item>
<location-item name="PHARMACY - Costco (Colchester) - Dose 1" address="218 Lower Mountain View Dr, Colchester, VT"></location-item>
<location-item name="PHARMACY - Hannaford (Essex) - Dose 1" address="21A Essex Way, Essex, VT"></location-item>
<location-item name="PHARMACY - Walmart (Williston) - Dose 1" address="863 Harvest Ln, Williston, VT"></location-item>
</div><scroll-rail size="93"></scroll-rail></div></div>
<div class="r"><p>CLICK SEARCH FOR ALL DATES/LOCATIONS:</p><p class="sel"><b>Current Selected Location:</b> .VTNG - DoubleTree Burlington - POD (Conference Center) - Dose 1</p><p class="ev">Events (1)</p>
<event-card date="Apr 29, 2021" name="COVID19 Vaccination - South Burlington Pfizer 1" address="870 Williston Rd, South Burlington"></event-card></div></div>
</div><scroll-rail size="87"></scroll-rail></div>
<footer><action-button primary>Select</action-button><action-button>Cancel</action-button></footer>`);

define('portal-page',()=>`<style>
:host{display:flex;flex:1;min-height:0;flex-direction:column;position:relative;background:#98a4ad;font-family:Lato,sans-serif;border-left:1px solid #111;border-bottom:1px solid #111;overflow:hidden}
header{height:71px;background:#667985;display:flex;align-items:center;padding:0 278px 0 261px;color:#94a2ac}
.name{border-left:1px solid #94a2ac;margin-left:15px;padding:0 0 4px 16px;font-size:16px;line-height:28px}
.user{margin-left:auto;display:flex;align-items:center;gap:9px;font:bold 14px Lato,sans-serif;color:#84939f}
.user a{color:inherit;text-decoration:none;margin-left:23px}
.logo text{font:17px "Liberation Serif",serif;fill:#8c9aa5}
main{flex:1}
.foot{height:31px;background:#909ca5;color:#6c86a0;font-size:13px;line-height:31px;text-align:right;padding-right:32px}
site-dialog{position:absolute;inset:47px 34px 47px 81px}
.x{position:absolute;right:26px;top:7px}
</style>
<header><svg class="logo" width="84" height="50" viewBox="0 0 84 50" role="img" aria-label="Vermont"><path d="M13 24L31 9q5-4 9 0l12 6 8 2 12 13-14-8-10-1-9-5-4-3-16 12z" fill="#8c9aa5"/><ellipse cx="50" cy="7" rx="4" ry="3" fill="none" stroke="#8c9aa5"/><text x="0" y="41">VERMONT</text></svg>
<div class="name">COVID-19 Event Portal</div>
<div class="user"><svg width="40" height="40" viewBox="0 0 40 40"><circle cx="20" cy="20" r="20" fill="#7d90a0"/><circle cx="20" cy="16" r="6" fill="#98a6b1"/><path d="M10 30c0-8 20-8 20 0z" fill="#98a6b1"/></svg><span>Welcome, Joshua Laraway</span><a href="#">Logout</a></div></header>
<main></main><div class="foot">© Vermont 2020 All Rights Reserved.</div>
<icon-button class="x" name="bigx" label="Close" size="30"></icon-button>
<site-dialog></site-dialog>`);

/* ---------- task bar ---------- */
define('task-bar',()=>`<style>
:host{display:flex;flex:none;height:40px;color:#fff;align-items:center;background:linear-gradient(90deg,#33323b 0,#333235 28%,#333538 40%,#2b2f39 45%,#303338 50%,#24262c 55%,#1d2a3d 57%,#1f2e42 60%,#333436 63%,#35363a 70%,#2a2c36 77%,#2c2d30 82%,#363130 88%,#2d2e31 95%,#2b2c2f)}
.s{display:flex;width:344px;height:40px;box-sizing:border-box;background:#f1f1f1;border:1px solid #b9b9b9;align-items:center;padding-left:11px;gap:11px}
input{border:0;outline:0;background:none;flex:1;padding:0;font:14px "Open Sans","Noto Sans",sans-serif;color:#333}
input::placeholder{color:#333;opacity:1}
.c{display:flex;position:relative;background:#68696d;box-sizing:border-box;border-bottom:2px solid #76b9ed;height:40px;align-items:center}
.c b{position:absolute;left:23px;top:18px;width:16px;height:16px;border-radius:50%;background:#455a64;font:10px/16px Roboto,sans-serif;text-align:center}
.tray{margin-left:auto;display:flex;align-items:center}
time{text-align:center;width:66px;line-height:18px;font-size:11px}
.n{position:relative;margin:0 4px 0 2px;width:44px;border-right:1px solid #777;height:40px}
.n b{position:absolute;left:15px;top:18px;width:15px;height:15px;border:1px solid #aaa;border-radius:50%;background:#2c2c30;font:12px/15px "Open Sans",sans-serif;text-align:center}
</style>
<icon-button name="win" label="Start" width="48" height="40"></icon-button>
<div class="s"><ui-icon name="search" size="17"></ui-icon><input aria-label="Search" placeholder="Type here to search"></div>
<icon-button name="cortana" label="Cortana" width="48" height="40"></icon-button><icon-button name="taskview" label="Task view" width="48" height="40"></icon-button><icon-button name="edge" label="Edge" width="53" height="40" size="24"></icon-button><icon-button name="ie" label="Internet Explorer" width="48" height="40" size="24"></icon-button><div class="c"><icon-button name="chrome" label="Chrome" width="48" height="38" size="24"></icon-button><b>J</b></div>
<div class="tray"><icon-button name="caret" label="Hidden icons" width="24"></icon-button><icon-button name="meet" label="Meet now" width="24"></icon-button><icon-button name="battery" label="Battery" width="24"></icon-button><icon-button name="wifi" label="Network" width="24"></icon-button><icon-button name="volume" label="Volume" width="24"></icon-button><time>10:09 AM<br>4/18/2021</time><div class="n"><icon-button name="note" label="Notifications" width="30" height="38"></icon-button><b>1</b></div></div>`);
</script>
</body>
</html>
